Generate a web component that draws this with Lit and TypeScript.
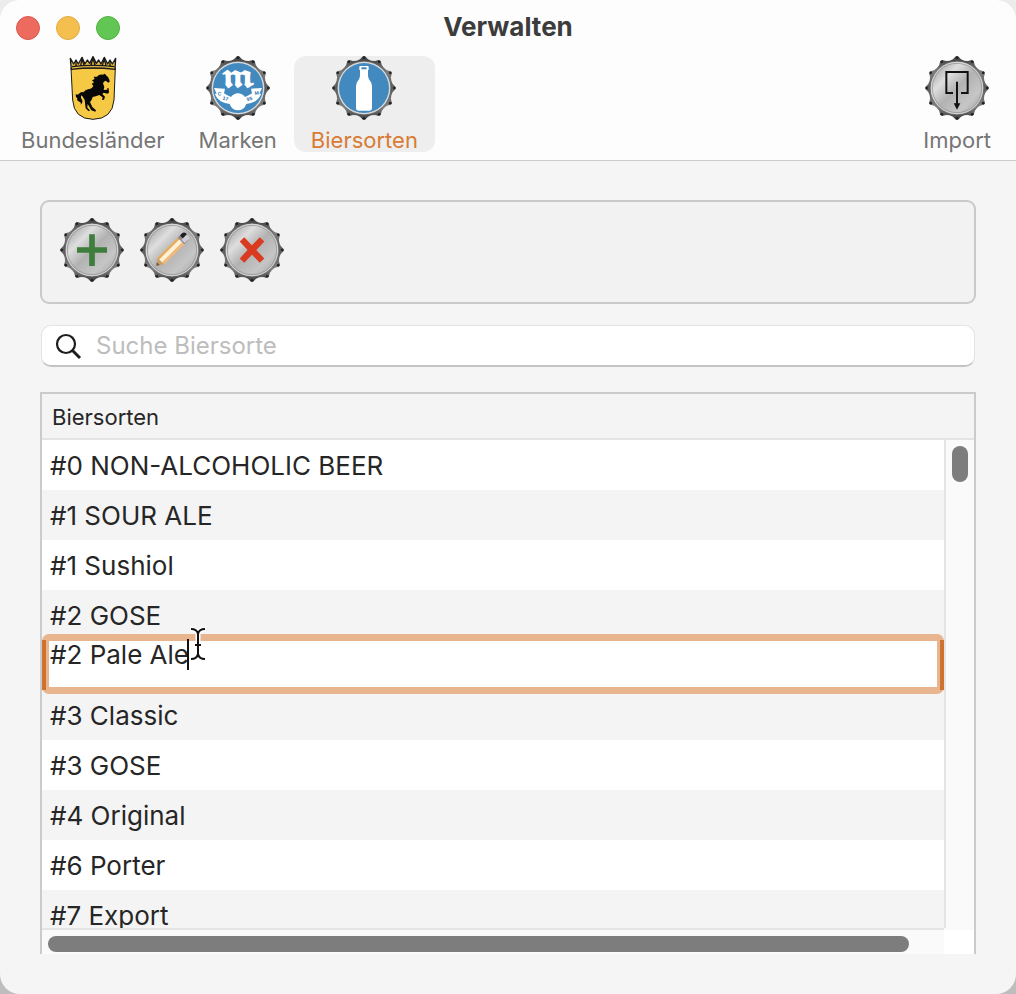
import { LitElement, html, svg, css, nothing } from "lit";
import { customElement, property, state } from "lit/decorators.js";
import { classMap } from "lit/directives/class-map.js";

/** Outline of a crown cap: twelve teeth around the centre of a 192 unit square. */
const CAP_OUTLINE = Array.from({ length: 12 }, (_, i) => {
  const at = (deg: number, r: number) => {
    const a = ((i * 30 + deg) * Math.PI) / 180;
    return `${(96 + r * Math.sin(a)).toFixed(1)},${(96 - r * Math.cos(a)).toFixed(1)}`;
  };
  return [at(-8, 87), at(-2, 95), at(2, 95), at(8, 87), at(15, 85)].join(" ");
}).join(" ");

const TEETH = Array.from({ length: 12 }, (_, i) => {
  const a = (i * 30 * Math.PI) / 180;
  return { x: 96 + 91 * Math.sin(a), y: 96 - 91 * Math.cos(a) };
});

const brandArt = svg`
  <text x="96" y="94" text-anchor="middle" font-size="92" font-weight="700" fill="#fff"
    font-family="'DejaVu Math TeX Gyre', 'DejaVu Sans', serif">𝖒</text>
  <path fill="#fff" d="M24 96 L57 98 L54 112 Q64 119 75 123 Q84 112 96 112 Q108 112 117 123 Q128 119 138 112 L135 98 L168 96
    L160 113 L166 113 Q160 128 148 136 Q136 143 121 144 Q114 163 96 163 Q78 163 71 144 Q56 143 44 136 Q32 128 26 113 L32 113 Z"/>
  <g fill="#2f6fa8" font-family="'Liberation Sans', sans-serif" font-weight="700" font-size="15">
    <text x="36" y="118" transform="rotate(12 41 112)">C</text>
    <text x="50" y="133" transform="rotate(18 58 128)">17</text>
    <text x="122" y="133" transform="rotate(-18 132 128)">95</text>
    <text x="146" y="116" transform="rotate(-10 152 110)">M</text>
  </g>`;

const bottleArt = svg`
  <path fill="#fff" d="M84 30 H108 Q110 30 110 34 V42 H108 V60 Q109 69 115 76 Q120 82 120 90 V157 Q120 164 113 164
    H79 Q72 164 72 157 V90 Q72 82 77 76 Q83 69 84 60 V42 H82 V34 Q82 30 84 30 Z"/>
  <rect x="88" y="34" width="16" height="6" rx="2" fill="#4189bf"/>`;

const importArt = svg`
  <path fill="none" stroke="#111" stroke-width="6" d="M84 111 H64 V48 H128 V111 H108"/>
  <path stroke="#111" stroke-width="6" d="M96 77 V148"/>
  <path fill="#111" d="M86 142 H106 L96 161 Z"/>`;

const addArt = svg`<path stroke="#3f7d3c" stroke-width="17" d="M51 96 H141 M96 49 V144"/>`;
const removeArt = svg`<path stroke="#d93a20" stroke-width="19" d="M66 64 L126 128 M126 64 L66 128"/>`;

const editArt = svg`
  <g transform="rotate(-45 96 96)">
    <path fill="#c9a06c" d="M29 96 L50 82 V110 Z"/>
    <path fill="#6e5a3c" d="M29 96 L38 90 V102 Z"/>
    <rect x="49" y="82" width="88" height="10" fill="#e8aa5c"/>
    <rect x="49" y="89" width="88" height="13" fill="#fff1d6"/>
    <rect x="49" y="101" width="88" height="9" fill="#f0b97a"/>
    <rect x="134" y="82" width="16" height="28" fill="#8d8a91"/>
    <rect x="138" y="94" width="22" height="14" fill="#cfcdd4"/>
    <path d="M144 82 H154 Q161 84 161 92 V94 H144 Z" fill="#1e1e22"/>
  </g>`;

const CAP_ART = {
  brand: brandArt,
  bottle: bottleArt,
  import: importArt,
  add: addArt,
  edit: editArt,
  remove: removeArt,
};

@customElement("cap-icon")
class CapIcon extends LitElement {
  @property() art: keyof typeof CAP_ART = "add";
  @property({ type: Boolean }) blue = false;

  static styles = css`
    :host { display: block; width: 64px; height: 64px; }
    svg { display: block; width: 100%; height: 100%; }
  `;

  render() {
    return html`<svg viewBox="0 0 192 192" aria-hidden="true">
      <defs>
        <linearGradient id="rim" x1="0" y1="0" x2="0" y2="1">
          <stop offset="0" stop-color="#3c3c3c" /><stop offset=".25" stop-color="#7c7c7c" />
          <stop offset=".5" stop-color="#5c5c5c" /><stop offset=".8" stop-color="#808080" />
          <stop offset="1" stop-color="#3a3a3a" />
        </linearGradient>
        <linearGradient id="metal" x1=".1" y1=".1" x2=".9" y2=".9">
          <stop offset="0" stop-color="#a8a8a8" /><stop offset=".25" stop-color="#dedede" />
          <stop offset=".5" stop-color="#b2b2b2" /><stop offset=".8" stop-color="#c6c6c6" />
          <stop offset="1" stop-color="#adadad" />
        </linearGradient>
      </defs>
      <polygon points=${CAP_OUTLINE} fill="url(#rim)" />
      ${TEETH.map((t) => svg`<circle cx=${t.x} cy=${t.y} r="4" fill="#222"/>`)}
      <circle cx="96" cy="96" r="80" fill="#777" />
      <circle cx="96" cy="96" r="79" fill=${this.blue ? "#dcdcdc" : "url(#metal)"} />
      ${this.blue
        ? svg`<circle cx="96" cy="96" r="75" fill="#4189bf"/>`
        : svg`<circle cx="96" cy="96" r="77" fill="none" stroke="#dedede" stroke-width="2"/>
              <circle cx="96" cy="96" r="74" fill="none" stroke="#8c8c8c" stroke-width="2"/>`}
      ${CAP_ART[this.art]}
    </svg>`;
  }
}

@customElement("crest-icon")
class CrestIcon extends LitElement {
  static styles = css`
    :host { display: block; width: 64px; height: 64px; }
    svg { display: block; width: 100%; height: 100%; }
  `;

  render() {
    return html`<svg viewBox="183 168 192 192" aria-hidden="true">
      <path fill="#f6c945" stroke="#1a1a1a" stroke-width="3"
        d="M213 204 L218 300 Q222 357 279 358 Q337 357 342 300 L346 204 Z" />
      <path fill="#e3b945" stroke="#1a1a1a" stroke-width="4" stroke-linejoin="round"
        d="M211 175 L221 192 L228 180 L235 192 L246 172 L255 192 L262 180 L269 190 L279 170 L289 190 L296 180 L303 192 L313 172 L323 192 L330 180 L337 192 L347 175 L345 208 Q279 200 214 208 Z" />
      <path fill="none" stroke="#1a1a1a" stroke-width="4"
        d="M216 200 Q279 192 343 200 M228 182 V198 M246 176 L242 197 M246 176 L252 196 M279 174 L273 195 M279 174 L285 195 M313 176 L307 196 M313 176 L318 197 M330 182 V198" />
      <path fill="#080808"
        d="M315 221 L318 226 Q325 230 328 239 L329 245 L325 248 L317 242 Q311 244 309 250 Q315 260 311 270
        L322 269 L322 264 L326 265 L327 278 L322 281 L311 278 L307 282 L315 290 L312 299 L306 300 L308 292 L298 285
        Q286 289 278 291 Q275 302 270 306 L277 321 L288 331 L286 335 L274 331 L263 312 L262 323 L270 331 L266 334 L257 325 L255 309
        Q257 301 250 293 Q247 288 245 286 Q240 292 246 299 Q250 307 242 314 Q244 306 238 305 Q229 302 232 295 Q226 291 227 283
        Q233 285 237 281 Q243 274 250 277 Q257 268 267 267 Q277 266 280 257 L275 252 L282 247 L276 241 L284 237 L281 230 L291 230 Q297 222 308 224 Z" />
    </svg>`;
  }
}

@customElement("app-root")
class AppRoot extends LitElement {
  @state() private tab = "Biersorten";
  @state() private editing = 4;
  @state() private sorts = [
    "#0 NON-ALCOHOLIC BEER",
    "#1 SOUR ALE",
    "#1 Sushiol",
    "#2 GOSE",
    "#2 Pale Ale",
    "#3 Classic",
    "#3 GOSE",
    "#4 Original",
    "#6 Porter",
    "#7 Export",
  ];

  static styles = css`
    :host {
      display: block;
      height: 100vh;
      background: linear-gradient(#ececec, #bdbdbd);
      font-family: Inter, "Liberation Sans", sans-serif;
      color: #262626;
    }
    * { box-sizing: border-box; }
    button, input { font: inherit; color: inherit; }
    button { border: 0; padding: 0; background: none; }
    .window {
      height: 100%;
      display: flex;
      flex-direction: column;
      overflow: hidden;
      border-radius: 20px;
      background: #f5f5f5;
    }
    .top { background: #fdfdfd; border-bottom: 1px solid #cbcbcb; padding-bottom: 8px; }
    .titlebar {
      display: grid;
      grid-template-columns: 1fr auto 1fr;
      align-items: center;
      height: 56px;
      padding: 0 16px;
    }
    .lights { display: flex; gap: 16px; }
    .light { width: 24px; height: 24px; border-radius: 50%; border: 1px solid; }
    .close { background: #ed6a5f; border-color: #d9594f; }
    .minimise { background: #f5bf4f; border-color: #dfa940; }
    .zoom { background: #61c654; border-color: #52b045; }
    .title { margin: 0; padding-bottom: 2px; font-size: 26px; line-height: 32px; font-weight: 700; color: #3c3c3c; }
    .tabs { display: flex; padding: 0 8px 0 4px; }
    .tab {
      display: flex;
      flex-direction: column;
      align-items: center;
      height: 96px;
      padding: 0 17px;
      border-radius: 12px;
      font-size: 22px;
      color: #757575;
    }
    .tab.active { background: #eeeeee; color: #d97b33; }
    .tab.last { margin-left: auto; }
    .tab span { padding-top: 4px; line-height: 32px; }
    .content {
      flex: 1;
      min-height: 0;
      display: flex;
      flex-direction: column;
      padding: 39px 40px 40px;
    }
    .actions {
      display: flex;
      gap: 16px;
      padding: 16px 18px 20px;
      border: 2px solid #c9c9c9;
      border-radius: 9px;
      background: #f2f2f2;
    }
    .search {
      display: flex;
      align-items: center;
      gap: 14px;
      height: 42px;
      margin: 21px 1px 25px;
      padding: 0 12px;
      border: 1px solid #e3e3e3;
      border-bottom: 2px solid #c4c4c4;
      border-radius: 10px;
      background: #fff;
      flex: none;
    }
    .search svg { width: 28px; height: 28px; flex: none; }
    .search input {
      flex: 1;
      min-width: 0;
      padding: 0;
      border: 0;
      outline: 0;
      background: none;
      font-size: 24px;
      line-height: 32px;
    }
    .search input::placeholder { color: #bdbdbd; opacity: 1; }
    .list {
      flex: 1;
      min-height: 0;
      display: grid;
      grid-template-columns: minmax(0, 1fr) 30px;
      grid-template-rows: 46px minmax(0, 1fr) 26px;
      border: 2px solid #cbcbcb;
      border-bottom: 0;
      background: #fff;
    }
    .viewport { grid-row: 1 / 3; overflow: hidden; min-height: 0; }
    .filler { background: #f4f4f4; border-bottom: 2px solid #e4e4e4; }
    table { width: 100%; border-collapse: separate; border-spacing: 0; }
    th {
      height: 46px;
      padding: 2px 10px 0;
      border-bottom: 2px solid #e4e4e4;
      background: #f4f4f4;
      font-size: 22px;
      line-height: 28px;
      font-weight: 400;
      text-align: left;
    }
    td { height: 50px; padding: 2px 8px 0; font-size: 26px; line-height: 32px; }
    tr.alt td { background: #f4f4f4; }
    td.editing { position: relative; padding: 0; background: #fff; }
    .editor {
      position: absolute;
      inset: -6px 0 -4px;
      border: 7px solid #e8b58f;
      border-radius: 7px;
      background: #fff;
      display: flex;
      align-items: flex-start;
    }
    .editor input {
      width: 100%;
      height: 32px;
      margin-top: -2px;
      padding: 0 1px;
      border: 0;
      outline: 0;
      background: none;
      line-height: 32px;
    }
    .edge {
      position: absolute;
      inset: 0;
      border: solid #d0722f;
      border-width: 0 4px;
      pointer-events: none;
    }
    .caret { position: absolute; left: 145px; top: -1px; width: 2px; height: 31px; background: #111; }
    .pointer { position: absolute; left: 146px; top: -14px; width: 20px; height: 36px; }
    .vbar { border-left: 2px solid #e4e4e4; background: #fafafa; padding: 6px; }
    .vthumb { width: 16px; height: 36px; border-radius: 8px; background: #7d7d7d; }
    .hbar { border-top: 2px solid #e4e4e4; background: #fafafa; padding: 6px 35px 6px 6px; }
    .hthumb { height: 16px; border-radius: 8px; background: #7d7d7d; }
    .corner { background: #fff; border-top: 2px solid #fafafa; }
  `;

  private tabButton(label: string, icon: unknown, last = false) {
    return html`<button
      class=${classMap({ tab: true, active: this.tab === label, last })}
      @click=${() => (this.tab = label)}
    >${icon}<span>${label}</span></button>`;
  }

  private row(name: string, i: number) {
    if (i !== this.editing) {
      return html`<tr class=${i % 2 ? "alt" : nothing}>
        <td @dblclick=${() => (this.editing = i)}>${name}</td>
      </tr>`;
    }
    return html`<tr>
      <td class="editing">
        <div class="editor"><input aria-label="Biersorte" .value=${name} /></div>
        <div class="edge"></div>
        <div class="caret"></div>
        <svg class="pointer" viewBox="0 0 20 36" fill="none" aria-hidden="true">
          <path stroke="#fff" stroke-width="5" d="M2 3 Q9 3 10 8 Q11 3 18 3 M10 8 V28 M6 19 H14 M2 33 Q9 33 10 28 Q11 33 18 33" />
          <path stroke="#111" stroke-width="2" d="M3 3 Q9 3 10 8 Q11 3 17 3 M10 8 V28 M7 19 H13 M3 33 Q9 33 10 28 Q11 33 17 33" />
        </svg>
      </td>
    </tr>`;
  }

  render() {
    return html`<div class="window">
      <header class="top">
        <div class="titlebar">
          <div class="lights">
            <button class="light close" aria-label="Schließen"></button>
            <button class="light minimise" aria-label="Minimieren"></button>
            <button class="light zoom" aria-label="Zoomen"></button>
          </div>
          <h1 class="title">Verwalten</h1>
        </div>
        <nav class="tabs">
          ${this.tabButton("Bundesländer", html`<crest-icon></crest-icon>`)}
          ${this.tabButton("Marken", html`<cap-icon art="brand" blue></cap-icon>`)}
          ${this.tabButton("Biersorten", html`<cap-icon art="bottle" blue></cap-icon>`)}
          ${this.tabButton("Import", html`<cap-icon art="import"></cap-icon>`, true)}
        </nav>
      </header>
      <main class="content">
        <div class="actions">
          <button aria-label="Hinzufügen"><cap-icon art="add"></cap-icon></button>
          <button aria-label="Bearbeiten"><cap-icon art="edit"></cap-icon></button>
          <button aria-label="Löschen"><cap-icon art="remove"></cap-icon></button>
        </div>
        <label class="search">
          <svg viewBox="0 0 28 28" fill="none" stroke="#1d1d1d" aria-hidden="true">
            <circle cx="12" cy="12" r="9" stroke-width="2.2" />
            <path d="M18 18 L26 26" stroke-width="3" />
          </svg>
          <input type="text" placeholder="Suche Biersorte" aria-label="Suche Biersorte" />
        </label>
        <section class="list">
          <div class="viewport">
            <table>
              <thead><tr><th scope="col">Biersorten</th></tr></thead>
              <tbody>${this.sorts.map((name, i) => this.row(name, i))}</tbody>
            </table>
          </div>
          <div class="filler"></div>
          <div class="vbar"><div class="vthumb"></div></div>
          <div class="hbar"><div class="hthumb"></div></div>
          <div class="corner"></div>
        </section>
      </main>
    </div>`;
  }
}
